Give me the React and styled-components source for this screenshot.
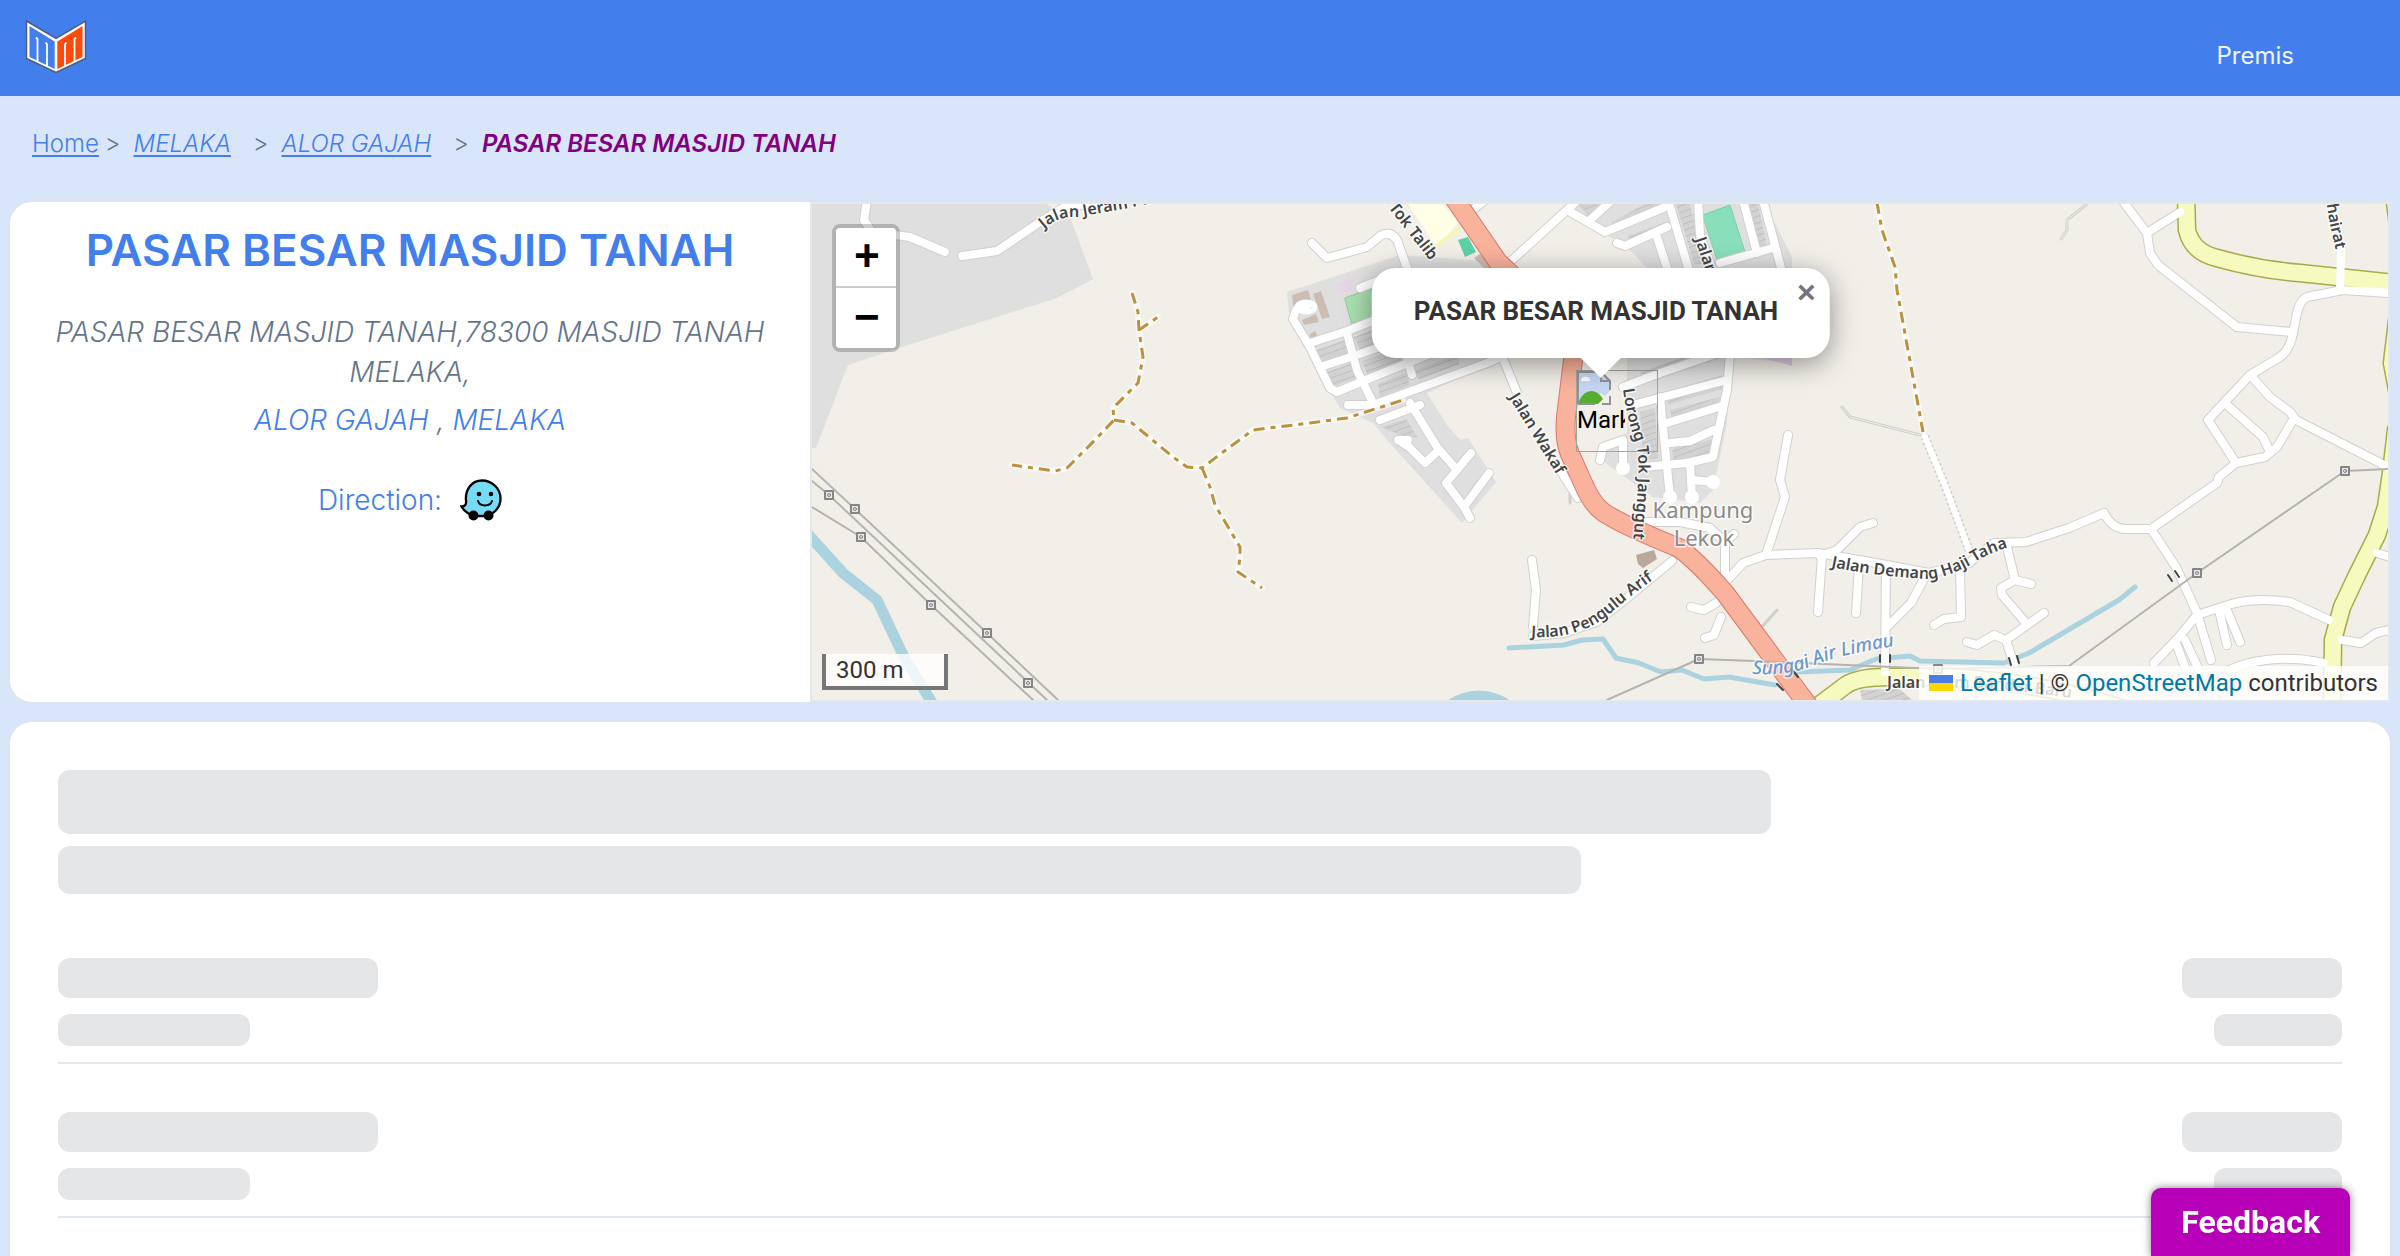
import React from 'react'
import styled, { createGlobalStyle } from 'styled-components'

const GlobalStyle = createGlobalStyle`
    * {
        box-sizing: border-box;
    }
    body {
        margin: 0;
        background-color: #d9e5fb;
        font-family: Inter, "Liberation Sans", sans-serif;
    }
`

const Page = styled.div`
    height: 100vh;
    overflow: hidden;
`

const Header = styled.header`
    height: 96px;
    padding: 16px 106px 0 24px;
    display: flex;
    align-items: center;
    justify-content: space-between;
    background-color: #427eec;
`
const LogoLink = styled.a`
    display: flex;
    margin-top: -20px;
`
const NavLink = styled.a`
    color: #f1f5fd;
    font-size: 24px;
    line-height: 32px;
    text-decoration: none;
`

const Breadcrumb = styled.nav`
    height: 104px;
    padding: 30px 32px;
    display: flex;
    font-size: 24px;
    line-height: 36px;
    color: #64748b;
`
const Crumb = styled.a`
    color: #427eec;
    font-weight: 300;
    font-style: ${props => props.$italic ? 'italic' : 'normal'};
    text-decoration: underline;
    text-underline-offset: 3px;
`
const Separator = styled.span`
    margin: 0 13px 0 ${props => props.$first ? '6px' : '22px'};
    font-weight: 300;
`
const Current = styled.span`
    color: purple;
    font-style: italic;
    font-weight: 600;
`

const Card = styled.section`
    margin: 0 8px 16px;
    border: 2px solid #dce4f2;
    border-radius: 24px;
    background-color: white;
`
const PlaceCard = styled(Card)`
    display: flex;
    height: 504px;
`
const Info = styled.div`
    width: 800px;
    padding: 16px 32px;
    text-align: center;
    font-size: 28px;
    font-weight: 300;
    line-height: 40px;
    color: #64748b;
`
const Title = styled.h1`
    margin: 0 0 30px;
    color: #427eec;
    font-size: 44px;
    font-weight: 600;
    line-height: 64px;
    white-space: nowrap;
`
const Address = styled.address`
    margin-bottom: 8px;
`
const Area = styled.div`
    font-style: italic;
    margin-bottom: 28px;
`
const AreaLink = styled.a`
    color: #427eec;
    text-decoration: none;
`
const Direction = styled.div`
    height: 64px;
    display: flex;
    align-items: center;
    justify-content: center;
    gap: 18px;
    color: #427eec;
`
const WazeLink = styled.a`
    display: flex;
`

const Map = styled.div`
    flex: 1;
    position: relative;
    overflow: hidden;
    border: 2px solid #e2e8f0;
    font-family: Roboto, "Liberation Sans", sans-serif;
    font-size: 24px;
    color: #333;
`
const Tiles = styled.svg`
    display: block;
    width: 100%;
    height: 100%;
`
const ZoomControl = styled.div`
    position: absolute;
    top: 20px;
    left: 20px;
    border: 4px solid rgba(0, 0, 0, 0.2);
    border-radius: 8px;
    background-clip: padding-box;
    display: flex;
    flex-direction: column;
`
const ZoomButton = styled.button`
    width: 60px;
    height: 60px;
    padding: 3px 0 0 2px;
    border: 0;
    border-bottom: ${props => props.$last ? '0' : '2px solid #ccc'};
    border-radius: ${props => props.$last ? '0 0 4px 4px' : '4px 4px 0 0'};
    background-color: white;
    color: black;
    font: bold 44px/56px "Liberation Mono", monospace;
`
const Scale = styled.div`
    position: absolute;
    left: 10px;
    bottom: 10px;
    width: 126px;
    height: 36px;
    padding-left: 10px;
    border: 4px solid #777;
    border-top: 0;
    background-color: rgba(255, 255, 255, 0.8);
    line-height: 32px;
`
const Attribution = styled.div`
    position: absolute;
    right: 0;
    bottom: 0;
    padding: 0 10px;
    background-color: rgba(255, 255, 255, 0.8);
    line-height: 34px;
    white-space: nowrap;

    a {
        color: #0078a8;
        text-decoration: none;
    }
`
const Flag = styled.svg`
    width: 24px;
    height: 16px;
    margin-right: 7px;
`
const Marker = styled.div`
    position: absolute;
    top: 166px;
    left: calc(50% - 24px);
    width: 82px;
    height: 82px;
    border: 1px solid #a3a3a0;
    color: black;
    line-height: 28px;
`
const MarkerAlt = styled.div`
    width: 48px;
    overflow: hidden;
    white-space: nowrap;
`
const Popup = styled.div`
    position: absolute;
    top: 64px;
    left: calc(50% + 1px);
    height: 90px;
    padding: 0 52px 0 42px;
    transform: translateX(-50%);
    border-radius: 24px;
    background-color: white;
    box-shadow: 0 6px 28px rgba(0, 0, 0, 0.4);
    font-size: 26px;
    font-weight: 700;
    line-height: 86px;
    white-space: nowrap;

    &::after {
        content: '';
        position: absolute;
        top: 100%;
        left: 50%;
        margin-left: -20px;
        border: 20px solid transparent;
        border-top-color: white;
        border-bottom: 0;
    }
`
const CloseButton = styled.button`
    position: absolute;
    top: 0;
    right: 0;
    width: 48px;
    height: 48px;
    padding: 0;
    border: 0;
    background: none;
    color: #757575;
    font: bold 32px/46px "Liberation Sans", sans-serif;
`

const PriceCard = styled(Card)`
    padding: 48px;
`
const Bone = styled.div`
    width: ${props => props.$width};
    height: ${props => props.$height};
    border-radius: 12px;
    background-color: #e5e6e8;
`
const Heading = styled.div`
    display: flex;
    flex-direction: column;
    gap: 12px;
    padding-bottom: 16px;
`
const Row = styled.div`
    display: flex;
    justify-content: space-between;
    padding: 48px 0 16px;
    border-bottom: 2px solid #e2e8f0;
`
const Column = styled.div`
    display: flex;
    flex-direction: column;
    align-items: ${props => props.$end ? 'flex-end' : 'flex-start'};
    gap: 16px;
`

const Feedback = styled.button`
    position: fixed;
    right: 50px;
    bottom: 0;
    height: 68px;
    padding: 0 30px;
    border: 0;
    border-radius: 10px 10px 0 0;
    background-color: #b700b7;
    box-shadow: 0 0 8px rgba(0, 0, 0, 0.5);
    color: white;
    font: bold 32px/68px Roboto, "Liberation Sans", sans-serif;
`

const Logo = () => (
  <svg width="64" height="56" viewBox="24 18 64 56" role="img" aria-label="Logo">
    <path d="M26.500 21L56 38.500 85.500 21v37.500L56 72.500 26.500 58.500z" fill="#fff" stroke="#4b5d80" strokeWidth="1.500" />
    <path d="M29.500 26L54.700 41.500v27.500L29.500 57z" fill="#427eec" />
    <path d="M82.500 26L57.300 41.500v27.500L82.500 57z" fill="#ff4b0a" />
    <path d="M36 37.500l1.500 1.500V62M45.500 42.500l1.500 1.500v22.500" fill="none" stroke="#fff" strokeWidth="1.800" />
    <path d="M76 37.500L74.500 39V62M66.500 42.500L65 44v22.500" fill="none" stroke="#fff" strokeWidth="1.800" />
  </svg>
)

const Waze = () => (
  <svg width="42" height="42" viewBox="0 0 42 42" role="img" aria-label="Waze">
    <path d="M22 1.500c10 0 18.500 8 18.500 18C40.500 29 33 37 23 37h-8C9 35.500 4 32 1.500 27.500c3.500 0 5-2 4.500-6C5 10 12 1.500 22 1.500z" fill="#76dcf5" stroke="#000" strokeWidth="2.300" />
    <circle cx="13.500" cy="36.500" r="5" />
    <circle cx="28.500" cy="36.500" r="5" />
    <circle cx="19" cy="15" r="2.300" />
    <circle cx="31" cy="15" r="2.300" />
    <path d="M18 22c2 6 12 6 14 0" fill="none" stroke="#000" strokeWidth="2" strokeLinecap="round" />
  </svg>
)

const BrokenImage = () => (
  <svg width="35" height="35" viewBox="0 0 35 35" style={{display: 'block'}}>
    <path d="M1 1h23l9 9v10l-5 5-4-3-5 6-4 5H1z" fill="#c6d6f3" />
    <path d="M4 10q1-5 5-4 4 0 4 4z" fill="#fff" />
    <path d="M2 30Q7 20 14 20t12 8l-5 5H2z" fill="#55ad31" />
    <path d="M1 33V1h23l9 9v9M24 1v9h9M33 25v8h-8M1 33h17" fill="none" stroke="#8f9296" strokeWidth="2" />
  </svg>
)

const streets = [
  // north west
  'M867 200L864 220 872 232 910 237 945 252',
  'M962 256L997 251 1040 222 1063 208 1100 202',
  // housing around Jalan Tok Talib
  'M1312 243L1327 258 1367 247 1380 236Q1390 230 1397 240L1407 268',
  'M1308 305L1296 310 1293 319 1310 347 1330 388 1337 392 1373 377 1440 350',
  'M1310 343L1347 331 1380 318 1420 300',
  'M1320 367L1357 355 1400 340',
  'M1347 333L1357 370 1373 403',
  'M1348 405L1373 405 1490 362 1502 356',
  'M1403 345L1412 375',
  'M1420 405L1380 420',
  'M1410 403L1437 447 1457 470 1471 453',
  'M1408 440L1398 440 1407 446M1402 440L1425 463 1439 450',
  'M1489 473L1464 507 1446 483 1457 470M1464 507L1470 518',
  'M1360 288L1380 280M1475 208L1490 196',
  'M1502 356L1517 393M1560 470L1578 498',
  // north of the pin
  'M1510 262L1567 210 1580 198M1567 210L1605 232 1663 208',
  'M1617 243L1625 246 1667 227M1590 220L1612 200',
  'M1668 200L1688 267M1657 237L1667 268',
  'M1698 200L1700 235 1712 270M1743 200L1757 253M1763 200L1781 268',
  'M1720 263L1773 248',
  // Lorong Tok Janggut
  'M1623 387L1660 373 1727 350M1633 405L1727 380',
  'M1730 355L1727 390 1713 457 1687 463 1643 467',
  'M1660 397L1670 497M1690 463L1692 497M1692 480L1713 482',
  'M1600 460L1603 447 1623 440V468M1667 423L1722 406M1670 443L1690 441 1714 430',
  // Kampung Lekok
  'M1643 522L1680 522 1710 528 1725 542 1725 583M1725 542L1734 534',
  'M1788 435L1780 480 1785 497 1766 555',
  'M1873 523L1860 527 1837 550 1820 556',
  'M1691 607L1704 610 1716 603M1721 617L1714 635 1705 638',
  'M1532 560L1536 590 1533 627M1672 561L1621 603 1596 622 1564 633 1533 636',
  'M1822 556L1818 612M1859 565L1856 613M1886 565L1885 672M1926 575L1911 603 1886 628',
  'M1960 570L1961 617 1944 619 1934 625',
  // Jalan Demang Haji Taha
  'M1723 585L1743 563 1766 555 1818 553 1876 563 1929 573 1969 563 1994 543 2026 542 2069 528 2104 513Q2112 529 2126 529L2151 529 2217 483 2219 477 2236 463 2265 457 2277 447 2293 420',
  'M2006 543L2015 580 2031 584M2015 580L2001 588 2002 595 2026 623',
  'M2044 613L2006 640 1994 635 1977 645 1967 642M2006 640L2015 668',
  'M2151 529L2176 567 2197 613 2211 660',
  'M2154 663L2179 637 2197 615 2222 607Q2250 596 2290 602L2329 620',
  'M2219 610L2227 645M2226 608L2240 642M2176 643L2186 670M2185 640L2199 670',
  'M2229 670Q2270 652 2324 663M2342 640L2361 643 2376 633 2390 630M2377 553L2390 557',
  // north east
  'M2122 200L2147 233 2150 253 2158 265 2237 327 2290 332M2147 233L2180 212',
  'M2390 293L2343 290 2307 297Q2300 300 2297 313L2293 333Q2290 350 2280 357L2250 375 2208 420 2236 463',
  'M2252 377L2270 397 2290 412 2296 420 2390 468M2227 405L2263 437 2270 452',
]

const tracks = [
  'M1132 293L1138 312 1139 330 1143 357 1138 383 1113 408 1114 420 1095 440 1067 468 1055 471 1012 465',
  'M1139 330L1158 317',
  'M1114 420L1132 423 1173 457 1187 467 1202 468 1223 452 1253 430 1310 423 1347 418 1403 400',
  'M1202 468L1210 487 1215 505 1240 547 1240 557 1238 572 1262 588',
  'M1877 203L1882 230 1895 267 1897 290 1923 432',
]

const powerLines = 'M812 469L855 509 987 633 1058 700M812 481L829 495 1047 700M812 507L861 537 931 605 1033 700M1607 700L1699 659 1754 661 1938 669 2069 666 2197 573 2345 471 2388 469'

const towers = [
  [829, 495], [855, 509], [861, 537], [931, 605], [987, 633], [1028, 683],
  [1699, 659], [1938, 669], [2197, 573], [2345, 471],
]

const housing = 'M1287 292L1400 255 1500 262 1510 355 1427 393 1447 425 1460 440 1468 438 1496 482 1462 523 1387 440 1373 423 1340 408 1290 323zM1567 204H1765L1792 257V363L1730 357 1727 423 1713 490 1700 503 1653 497 1597 457 1600 445 1627 433V360L1647 268 1627 247 1603 233z'

const blocks = 'M1316 350l28-10 6 14-27 10zM1354 337l30-11 7 15-30 10zM1324 373l27-10 6 15-26 9zM1362 361l34-12 7 14-35 13zM1378 384l28-11 4 12-30 12zM1415 370l44-16v10l-40 16zM1381 427l25-8 12 19-18-3zM1577 203l30 2-18 12zM1612 222l44-24 3 8-48 22zM1628 236l40-15 3 10-38 14zM1676 204h14l14 60h-10zM1747 204h11l9 42h-12zM1672 390l50-15v14l-55 16zM1640 372l80-28v14l-75 26zM1670 410l50-13-3 12-44 13zM1672 449l42-10-3 16-38 5zM1640 412l15-4 3 50-15 3zM1860 690l40-1 12 11h-50z'

const labels = [
  { id: 'jeram', text: 'Jalan Jeram Pasu', d: 'M1044 229Q1058 216 1077 217L1123 209 1180 197' },
  { id: 'talib', text: 'Jalan Tok Talib', d: 'M1362 174L1450 286' },
  { id: 'jalan', text: 'Jalan', d: 'M1695 239L1712 290' },
  { id: 'wakaf', text: 'Jalan Wakaf', d: 'M1509 397L1566 490' },
  { id: 'lorong', text: 'Lorong Tok Janggut', d: 'M1623 389Q1627 420 1635 440T1632 550' },
  { id: 'pengulu', text: 'Jalan Pengulu Arif', d: 'M1531 637Q1580 640 1612 612T1675 566' },
  { id: 'demang', text: 'Jalan Demang Haji Taha', d: 'M1831 567Q1880 577 1930 579 1955 575 1975 562T2030 542' },
  { id: 'chairat', text: 'Khairat', d: 'M2325 194L2330 225 2340 268' },
  { id: 'bandar', text: 'Jalan Alam Bandar Baru', d: 'M1887 688L1980 688Q2060 694 2140 710' },
]

const MapTiles = () => (
  <Tiles viewBox="812 204 1576 496" preserveAspectRatio="xMidYMid slice" fill="none" strokeLinejoin="round" strokeLinecap="round">
    <defs>
      <pattern id="roofs" width="6" height="6" patternUnits="userSpaceOnUse" patternTransform="rotate(-20)">
        <rect width="6" height="6" fill="#d2d2d2" />
        <rect width="6" height="1" fill="#c0c0c0" />
      </pattern>
    </defs>
    <rect x="812" y="204" width="1576" height="496" fill="#f2efe9" />
    <path d="M812 204H1046L1070 217 1093 279 1057 298 902 347 848 365 816 448H812z" fill="#dfdfdf" />
    <path d={housing} fill="#e0dfdf" />
    <path d={blocks} fill="url(#roofs)" />
    <path d="M1760 357l32-2v11z" fill="#dccbe0" />
    <path d="M1336 284l18-7-2 14-14 2z" fill="#e6d5e4" />
    <path d="M1345 298l27-10 2 29-22 6z" fill="#aae0b0" stroke="#8ccb98" />
    <path d="M1703 215l27-10 15 47-27 10z" fill="#88dfba" stroke="#77cfaa" />
    <path d="M1408 204h35l15 19-21 25z" fill="#ffffe5" />
    <path d="M1434 248l26-20" stroke="#f7f4b8" strokeWidth="4" />
    <path d="M1458 240l10-3 8 15-11 5z" fill="#5fcfa6" />
    <path d="M1292 295l16-5 3 10-18 6zM1313 294l8-3 9 26-8 2zM1302 320l14-6 3 8-15 3zM1310 334l5-3 4 7-8 3zM1474 258l6-4 14 14h-10z" fill="#cbbdb2" />
    <path d="M1636 555l18-5 3 9-14 9-5-4z" fill="#b8a99c" />

    <g stroke="#aad3df">
      <path d="M806 532L843 573 877 600 903 655 934 706" strokeWidth="11" />
      <path d="M1509 648L1564 645 1582 640 1603 639 1616 658 1639 663 1661 672 1682 670 1704 679 1729 677 1775 685M1798 672L1850 670 1876 659 1910 656 1920 661 2004 663 2029 653 2119 600 2135 587" strokeWidth="5" />
      <path d="M1446 702Q1462 691 1479 691T1512 702z" fill="#aad3df" />
    </g>

    <g stroke="#cfcfcf" strokeWidth="3">
      <path d="M1842 407L1850 417 1920 435M2087 204L2067 220 2067 230 2061 239M1777 610L1761 628M1570 488V503" />
      <path d="M1842 407L1850 417 1920 435M2087 204L2067 220 2067 230 2061 239" stroke="#f2efe9" strokeWidth="1" />
    </g>
    <path d="M1925 437L1944 483 1969 550" stroke="#c6c6c6" strokeWidth="9" strokeDasharray="2 3" strokeLinecap="butt" />
    <path d="M1925 437L1944 483 1969 550" stroke="#fff" strokeWidth="6" />

    <g stroke="#d2d0ce" strokeWidth="10">
      {streets.map(d => <path key={d} d={d} />)}
    </g>
    <g stroke="#a5ad4a" strokeWidth="19">
      <path d="M2186 195L2187 230Q2192 252 2217 258 2260 270 2300 273L2395 283" />
      <path d="M2394 195L2400 240M2398 313L2392 363 2398 395M2396 430L2391 473 2386 507 2377 535 2357 575 2342 607 2333 640 2332 710" />
      <path d="M1810 712L1846 685Q1858 677 1888 677H1950Q2060 684 2140 715" />
    </g>
    <g stroke="#f7fabf" strokeWidth="16">
      <path d="M2186 195L2187 230Q2192 252 2217 258 2260 270 2300 273L2395 283" />
      <path d="M2394 195L2400 240M2398 313L2392 363 2398 395M2396 430L2391 473 2386 507 2377 535 2357 575 2342 607 2333 640 2332 710" />
      <path d="M1810 712L1846 685Q1858 677 1888 677H1950Q2060 684 2140 715" />
    </g>
    <g stroke="#fff" strokeWidth="8">
      {streets.map(d => <path key={d} d={d} />)}
      <path d="M2341 250L2340 290" />
    </g>
    <ellipse cx="1306" cy="307" rx="9" ry="5" stroke="#fff" strokeWidth="5" />
    <g fill="#fff">
      <circle cx="1670" cy="497" r="7" />
      <circle cx="1692" cy="497" r="7" />
      <circle cx="1713" cy="482" r="7" />
      <circle cx="1623" cy="468" r="7" />
    </g>

    <path d="M1452 195L1498 262 1560 320Q1576 335 1573 360L1566 417Q1564 440 1570 454L1583 483Q1592 504 1603 512 1620 524 1679 548 1696 560 1725 593L1810 708" stroke="#d9786a" strokeWidth="20" />
    <path d="M1452 195L1498 262 1560 320Q1576 335 1573 360L1566 417Q1564 440 1570 454L1583 483Q1592 504 1603 512 1620 524 1679 548 1696 560 1725 593L1810 708" stroke="#f9b29c" strokeWidth="18" />
    <path d="M1777 684l6 6M1793 671l5 6M2168 575l4 6M2175 571l4 6M1880 655v7M1890 655v7M2009 658l2 7M2017 656l2 7" stroke="#444" strokeWidth="2" />

    <g stroke="#fff" strokeOpacity="0.6" strokeWidth="6">
      {tracks.map(d => <path key={d} d={d} />)}
    </g>
    <g stroke="#b8923f" strokeWidth="3" strokeDasharray="11 6 5 6" strokeLinecap="butt">
      {tracks.map(d => <path key={d} d={d} />)}
    </g>

    <path d={powerLines} stroke="#b5b3b0" strokeWidth="2" />
    {towers.map(([x, y]) => (
      <g key={x}>
        <rect x={x - 4} y={y - 4} width="8" height="8" fill="#e6e6e6" stroke="#858585" strokeWidth="2" />
        <circle cx={x} cy={y} r="1.500" stroke="#858585" />
      </g>
    ))}

    <g fill="#444" stroke="#fff" strokeOpacity="0.7" strokeWidth="3" paintOrder="stroke" fontFamily='"Noto Sans", sans-serif' fontSize="16" fontWeight="600">
      {labels.map(({ id, text, d }) => (
        <React.Fragment key={id}>
          <path id={id} d={d} fill="none" stroke="none" />
          <text><textPath href={`#${id}`}>{text}</textPath></text>
        </React.Fragment>
      ))}
      <path id="sungai" d="M1752 674Q1790 676 1815 665T1915 643" fill="none" stroke="none" />
      <text fill="#6b98cc" fontStyle="italic" fontSize="19" fontWeight="500"><textPath href="#sungai">Sungai Air Limau</textPath></text>
      <text fill="#8b8b8b" fontSize="22" fontWeight="400" textAnchor="middle">
        <tspan x="1703" y="518">Kampung</tspan>
        <tspan x="1704" y="546">Lekok</tspan>
      </text>
    </g>
  </Tiles>
)

const SkeletonRow = () => (
  <Row>
    <Column>
      <Bone $width="320px" $height="40px" />
      <Bone $width="192px" $height="32px" />
    </Column>
    <Column $end>
      <Bone $width="160px" $height="40px" />
      <Bone $width="128px" $height="32px" />
    </Column>
  </Row>
)

const App = () => {
  return (
    <Page>
        <GlobalStyle/>
        <Header>
            <LogoLink href="#home"><Logo/></LogoLink>
            <NavLink href="#premis">Premis</NavLink>
        </Header>
        <Breadcrumb aria-label="Breadcrumb">
            <Crumb href="#home">Home</Crumb>
            <Separator $first>&gt;</Separator>
            <Crumb href="#melaka" $italic>MELAKA</Crumb>
            <Separator>&gt;</Separator>
            <Crumb href="#alor-gajah" $italic>ALOR GAJAH</Crumb>
            <Separator>&gt;</Separator>
            <Current>PASAR BESAR MASJID TANAH</Current>
        </Breadcrumb>
        <PlaceCard>
            <Info>
                <Title>PASAR BESAR MASJID TANAH</Title>
                <Address>PASAR BESAR MASJID TANAH,78300 MASJID TANAH MELAKA,</Address>
                <Area>
                    <AreaLink href="#alor-gajah">ALOR GAJAH</AreaLink> , <AreaLink href="#melaka">MELAKA</AreaLink>
                </Area>
                <Direction>
                    Direction:
                    <WazeLink href="#waze"><Waze/></WazeLink>
                </Direction>
            </Info>
            <Map>
                <MapTiles/>
                <Marker>
                    <BrokenImage/>
                    <MarkerAlt>Marker</MarkerAlt>
                </Marker>
                <Popup>
                    PASAR BESAR MASJID TANAH
                    <CloseButton aria-label="Close popup">×</CloseButton>
                </Popup>
                <ZoomControl>
                    <ZoomButton aria-label="Zoom in">+</ZoomButton>
                    <ZoomButton aria-label="Zoom out" $last>−</ZoomButton>
                </ZoomControl>
                <Scale>300 m</Scale>
                <Attribution>
                    <a href="#leaflet">
                        <Flag viewBox="0 0 12 8">
                            <path fill="#4c7be1" d="M0 0h12v4H0z"/>
                            <path fill="#ffd500" d="M0 4h12v4H0z"/>
                        </Flag>
                        Leaflet
                    </a> | © <a href="#osm">OpenStreetMap</a> contributors
                </Attribution>
            </Map>
        </PlaceCard>
        <PriceCard>
            <Heading>
                <Bone $width="75%" $height="64px" />
                <Bone $width="66.666%" $height="48px" />
            </Heading>
            <SkeletonRow/>
            <SkeletonRow/>
            <SkeletonRow/>
        </PriceCard>
        <Feedback>Feedback</Feedback>
    </Page>
  )
}

export default App
